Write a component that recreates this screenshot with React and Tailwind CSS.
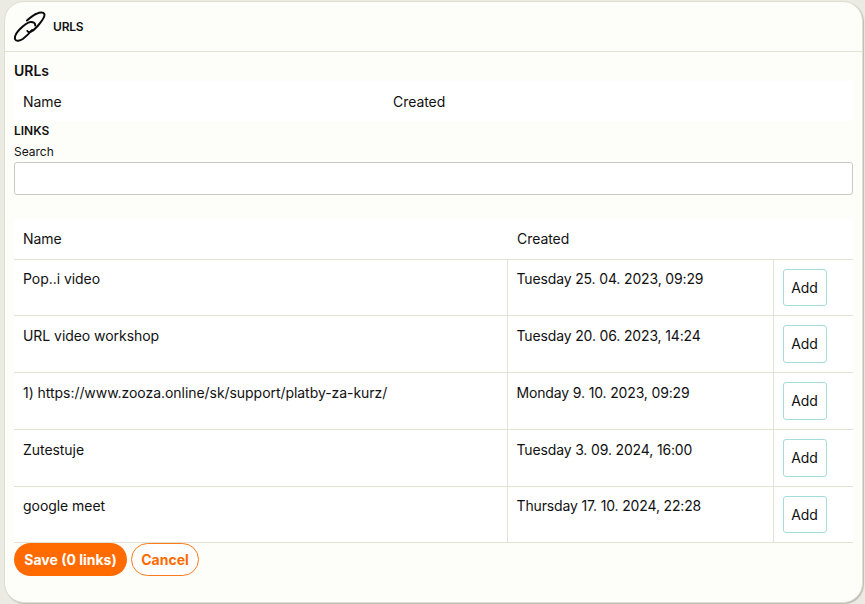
const rows = [
  ["Pop..i video", "Tuesday 25. 04. 2023, 09:29", "h-[56px]", "pt-[8px]", "h-[37px]"],
  ["URL video workshop", "Tuesday 20. 06. 2023, 14:24", "h-[57px]", "pt-[9px]", "h-[38px]"],
  ["1) https://www.zooza.online/sk/support/platby-za-kurz/", "Monday 9. 10. 2023, 09:29", "h-[57px]", "pt-[9px]", "h-[38px]"],
  ["Zutestuje", "Tuesday 3. 09. 2024, 16:00", "h-[57px]", "pt-[9px]", "h-[38px]"],
  ["google meet", "Thursday 17. 10. 2024, 22:28", "h-[56px]", "pt-[8px]", "h-[37px]"],
];

function LinkIcon() {
  return (
    <svg width="32" height="32" viewBox="0 0 32 32" fill="none" stroke="#0b0b0b" strokeWidth="2" strokeLinecap="round" className="shrink-0">
      <path d="M13 9.5 C16 7 19.5 4 22.5 2.8 C25.5 1.4 29.5 0.8 30.4 3.2 C31.2 6 27.5 10.5 24.5 14 C22 17 19 20 16 21 C14.8 21.3 13.8 21 13.4 20" />
      <path d="M21.2 14.5 C21.4 12.2 19.5 10.8 16.5 11 C12.5 11.4 8.5 15.5 5 19 C2.5 21.8 0 25.5 1.2 28.4 C2.4 30.8 6 29.8 8.8 28 C12.8 25 16 21.5 18 19" />
    </svg>
  );
}

export default function App() {
  return (
    <div className="w-[865px] h-[604px] bg-[#ebebe3] pt-px pl-[4px] pr-[2px] pb-px font-['Inter','Liberation_Sans',sans-serif] text-[#111]">
      <div className="h-full rounded-[20px] bg-[#fdfdfa] border border-[#dedfcf] shadow-[1px_1px_1px_rgba(0,0,0,0.2)] flex flex-col overflow-hidden">
        <div className="h-[50px] shrink-0 border-b border-[#e2e3d3] flex items-center gap-[7px] pl-[9px]">
          <LinkIcon />
          <span className="text-[12px] font-semibold tracking-[-0.2px]">URLS</span>
        </div>
        <div className="pl-[9px] pr-[9px] flex flex-col">
          <h2 className="text-[14px] font-semibold leading-[16px] mt-[11px]">URLs</h2>
          <table className="w-full mt-[2px] bg-white text-[14px] tracking-[-0.05px]">
            <thead>
              <tr className="h-[40px] text-left">
                <th className="font-normal pl-[9px] w-[379px]">Name</th>
                <th className="font-normal">Created</th>
              </tr>
            </thead>
          </table>
          <h3 className="text-[12px] font-semibold leading-[14px] mt-[3px]">LINKS</h3>
          <label className="text-[12px] leading-[14px] mt-[7px]">Search</label>
          <input className="block w-full h-[33px] mt-[3px] bg-white border border-[#c9c9c4] rounded-[3px]" />
          <table className="w-full table-fixed mt-[24px] bg-white text-[14px] tracking-[-0.05px] border-collapse">
            <colgroup>
              <col className="w-[493px]" />
              <col className="w-[266px]" />
              <col />
            </colgroup>
            <thead>
              <tr className="h-[40px] text-left">
                <th className="font-normal pl-[9px]">Name</th>
                <th className="font-normal pl-[10px]" colSpan={2}>Created</th>
              </tr>
            </thead>
            <tbody>
              {rows.map(([name, created, height, top, buttonHeight]) => (
                <tr key={name} className={`${height} border-t border-b border-[#e2e3d3] align-top`}>
                  <td className={`pl-[9px] ${top}`}>{name}</td>
                  <td className={`pl-[9px] ${top} border-l border-[#e2e3d3] tracking-[-0.15px]`}>{created}</td>
                  <td className="pl-[9px] pt-[9px] border-l border-[#e2e3d3]">
                    <button className={`block w-[44px] ${buttonHeight} bg-white border border-[#a5dcdc] rounded-[3px] text-[14px]`}>Add</button>
                  </td>
                </tr>
              ))}
            </tbody>
          </table>
          <div className="flex gap-[4px]">
            <button className="h-[33px] w-[113px] rounded-full bg-[#ff6b00] text-white text-[14px] font-bold">Save (0 links)</button>
            <button className="h-[33px] w-[68px] rounded-full bg-white border border-[#ff7a1a] text-[#ff6b00] text-[14px] font-bold">Cancel</button>
          </div>
        </div>
      </div>
    </div>
  );
}
